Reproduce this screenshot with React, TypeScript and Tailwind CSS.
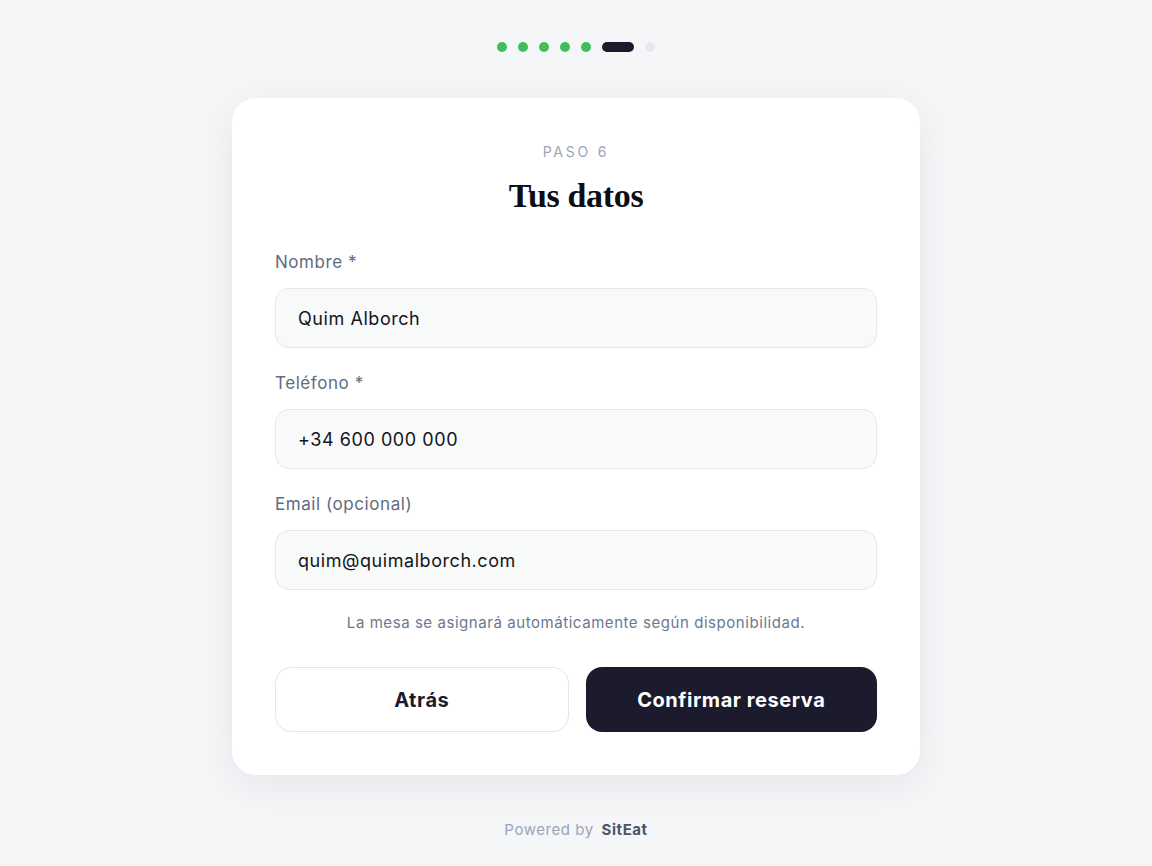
export default function App() {
  const fields = [
    { label: "Nombre *", value: "Quim Alborch" },
    { label: "Teléfono *", value: "+34 600 000 000" },
    { label: "Email (opcional)", value: "quim@quimalborch.com" },
  ];

  return (
    <div
      className="min-h-[866px] bg-[#f5f6f8] flex flex-col items-center pt-[42px] tracking-[0.035em]"
      style={{ fontFamily: "Inter, 'Noto Sans', sans-serif" }}
    >
      {/* progress */}
      <div className="flex items-center gap-[11px] h-[10px]">
        {[0, 1, 2, 3, 4].map((i) => (
          <span key={i} className="w-[10px] h-[10px] rounded-full bg-[#3fbf5a]" />
        ))}
        <span className="w-[32px] h-[10px] rounded-full bg-[#1c1b2e]" />
        <span className="w-[10px] h-[10px] rounded-full bg-[#e6e8eb]" />
      </div>

      <div className="mt-[46px] w-[688px] bg-white rounded-[24px] shadow-[0_10px_40px_rgba(20,25,40,0.07)] px-[43px] pt-[44px] pb-[43px]">
        <p className="text-center text-[14px] leading-[20px] tracking-[0.2em] text-[#9aa5b8]">
          PASO 6
        </p>
        <h1
          className="mt-[14px] text-center text-[34px] leading-[40px] font-bold text-[#0d0d12] tracking-[-0.01em]"
          style={{ fontFamily: "'Liberation Serif', 'DejaVu Serif', serif" }}
        >
          Tus datos
        </h1>

        <div className="mt-[34px] flex flex-col gap-[23px]">
          {fields.map((f) => (
            <div key={f.label} className="flex flex-col gap-[14px]">
              <label className="text-[17px] leading-[24px] text-[#5f6b7e]">{f.label}</label>
              <div className="h-[60px] rounded-[14px] bg-[#f8f9f9] border border-[#e6e8eb] flex items-center px-[22px] text-[18px] text-[#14141c]">
                {f.value}
              </div>
            </div>
          ))}
        </div>

        <p className="mt-[23px] text-center text-[15px] leading-[20px] text-[#6b7890]">
          La mesa se asignará automáticamente según disponibilidad.
        </p>

        <div className="mt-[34px] flex gap-[17px]">
          <button className="flex-1 h-[65px] rounded-[16px] bg-white border border-[#e3e5e8] text-[20px] font-bold text-[#1c1b2e]">
            Atrás
          </button>
          <button className="flex-1 h-[65px] rounded-[16px] bg-[#1c1b2e] text-[20px] font-bold text-white">
            Confirmar reserva
          </button>
        </div>
      </div>

      <p className="mt-[45px] text-[15px] leading-[20px] text-[#9aa5b8]">
        Powered by <span className="ml-[3px] font-bold text-[#4a5568]">SitEat</span>
      </p>
    </div>
  );
}
